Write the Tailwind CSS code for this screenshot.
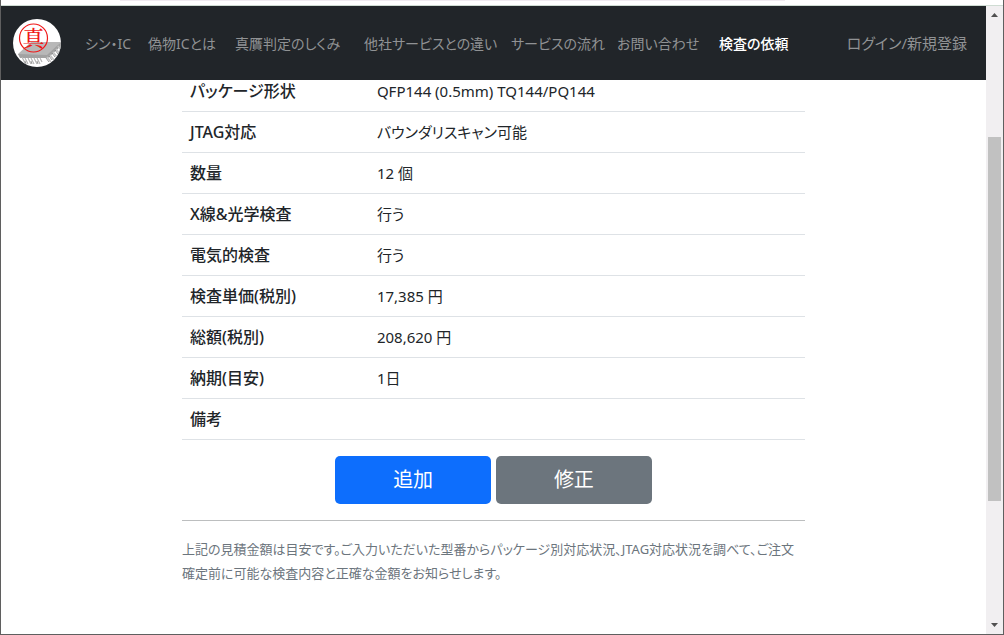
<!DOCTYPE html>
<html lang="ja">
<head>
  <meta charset="UTF-8">
  <meta name="viewport" content="width=device-width, initial-scale=1.0">
  <title>シン・IC</title>
  <script src="https://cdn.jsdelivr.net/npm/@tailwindcss/browser@4"></script>
  <style>
    body{font-family: 'Noto Sans', 'Noto Sans CJK JP', sans-serif; font-feature-settings: 'palt';}
  </style>
</head>
<body class="h-screen flex flex-col overflow-hidden bg-white text-[#212529] border-x border-b border-[#5f5f5f]">
  <div class="h-[6px] shrink-0 px-[119px] border-b border-[#cfdcd3]">
    <div class="h-px w-[87%] bg-[#f0eaf0]"></div>
  </div>
  <div class="flex flex-1 min-h-0">
    <div class="flex-1 min-w-0 overflow-hidden">
      <!--navbar-->
      <nav class="relative z-10 h-[74px] pl-3 pr-[11px] flex items-center bg-[#212529] text-[14px] text-[#909294] whitespace-nowrap">
        <a href="#" class="mr-4 shrink-0" aria-label="シン・IC">
          <svg class="w-12 h-12" viewBox="0 0 48 48">
            <defs>
              <clipPath id="round"><circle cx="24" cy="24" r="24"/></clipPath>
            </defs>
            <g clip-path="url(#round)">
              <rect width="48" height="48" fill="#fff"/>
              <path d="M5 35L18 23H48L35 38H7Z" fill="#b8b8b8"/>
              <path d="M5 35L7 39H35L48 27V23L34 36Z" fill="#a2a2a2"/>
              <path d="M9 38L12 44M12 39L15 45M15 39L18 45M18 39L21 45M21 39L24 45M24 39L27 45M27 39L29 43" stroke="#b5b5b5" stroke-width="1.2"/>
              <path d="M12 42L13 45M18 42L19 45M24 42L25 45" stroke="#808080" stroke-width="0.8"/>
              <path d="M34 38L38 43M37 36L41 41M40 33L44 38M43 30L47 35M45 27L48 31" stroke="#c4c4c4" stroke-width="1.6"/>
              <path d="M33 39L36 43M36 37L39 41M39 34L42 38M42 31L45 35" stroke="#808080" stroke-width="0.8"/>
              <circle cx="20.5" cy="19" r="14" fill="none" stroke="#f01818" stroke-width="1.2"/>
              <text x="20.5" y="27" text-anchor="middle" font-size="22" font-weight="500" font-family="'Noto Serif CJK JP','Noto Sans CJK JP',serif" fill="#f01818">真</text>
            </g>
          </svg>
        </a>
        <ul class="flex-1 grid grid-cols-[63px_87px_129px_147px_106px_102px_auto]">
          <li><a href="#" class="block px-2 py-2">シン・IC</a></li>
          <li><a href="#" class="block px-2 py-2">偽物ICとは</a></li>
          <li><a href="#" class="block px-2 py-2">真贋判定のしくみ</a></li>
          <li><a href="#" class="block px-2 py-2">他社サービスとの違い</a></li>
          <li><a href="#" class="block px-2 py-2">サービスの流れ</a></li>
          <li><a href="#" class="block px-2 py-2">お問い合わせ</a></li>
          <li><a href="#" class="block px-2 py-2 text-white font-medium">検査の依頼</a></li>
        </ul>
        <a href="#" class="block px-2 py-2 text-[15px]">ログイン/新規登録</a>
      </nav>

      <!--見積内容 (先頭行はnavbarの下に隠れる)-->
      <main class="w-full max-w-[623px] mx-auto -mt-[9px]">
        <table class="w-full table-fixed border-collapse text-left text-[15px] leading-6">
          <tbody>
            <tr class="border-b border-[#dee2e6]"><th class="w-[30%] p-2 text-base font-medium">パッケージ形状</th><td class="p-2">QFP144 (0.5mm) TQ144/PQ144</td></tr>
            <tr class="border-b border-[#dee2e6]"><th class="p-2 text-base font-medium">JTAG対応</th><td class="p-2">バウンダリスキャン可能</td></tr>
            <tr class="border-b border-[#dee2e6]"><th class="p-2 text-base font-medium">数量</th><td class="p-2">12 個</td></tr>
            <tr class="border-b border-[#dee2e6]"><th class="p-2 text-base font-medium">X線&amp;光学検査</th><td class="p-2">行う</td></tr>
            <tr class="border-b border-[#dee2e6]"><th class="p-2 text-base font-medium">電気的検査</th><td class="p-2">行う</td></tr>
            <tr class="border-b border-[#dee2e6]"><th class="p-2 text-base font-medium">検査単価(税別)</th><td class="p-2">17,385 円</td></tr>
            <tr class="border-b border-[#dee2e6]"><th class="p-2 text-base font-medium">総額(税別)</th><td class="p-2">208,620 円</td></tr>
            <tr class="border-b border-[#dee2e6]"><th class="p-2 text-base font-medium">納期(目安)</th><td class="p-2">1日</td></tr>
            <tr class="border-b border-[#dee2e6]"><th class="p-2 text-base font-medium">備考</th><td class="p-2"></td></tr>
          </tbody>
        </table>
        <div class="mt-4 flex justify-center gap-[5px] text-xl text-white">
          <button type="button" class="w-1/4 h-12 rounded-[5px] bg-[#0d6efd]">追加</button>
          <button type="button" class="w-1/4 h-12 rounded-[5px] bg-[#6c757d]">修正</button>
        </div>
        <hr class="my-4 border-[#bcbebf]">
        <p class="text-[13px] leading-6 text-[#6c757d]">上記の見積金額は目安です。ご入力いただいた型番からパッケージ別対応状況、JTAG対応状況を調べて、ご注文確定前に可能な検査内容と正確な金額をお知らせします。</p>
      </main>
    </div>

    <!--scrollbar-->
    <div class="w-[17px] shrink-0 flex flex-col items-center bg-[#f1eff1]">
      <svg class="w-[17px] h-[17px]" viewBox="0 0 17 17"><path d="M5 11L8.5 7L12 11Z" fill="#505050"/></svg>
      <div class="flex-[114] basis-0"></div>
      <div class="w-[13px] flex-[364] basis-0 bg-[#c1c1c1]"></div>
      <div class="flex-[116] basis-0"></div>
      <svg class="w-[17px] h-[17px]" viewBox="0 0 17 17"><path d="M5 6L8.5 10L12 6Z" fill="#505050"/></svg>
    </div>
  </div>
</body>
</html>
